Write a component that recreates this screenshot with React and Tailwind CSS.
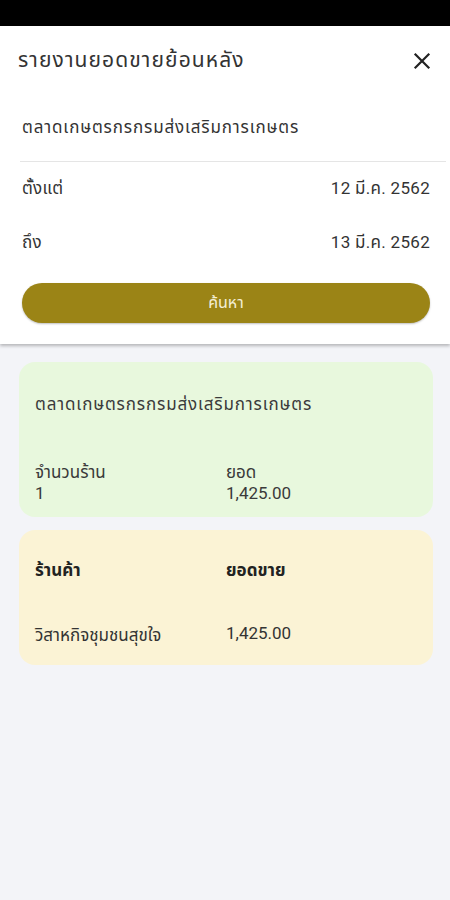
import React from "react";

const font = { fontFamily: 'Roboto, "Noto Sans", "Noto Sans Thai", sans-serif' };

function CloseIcon() {
  return (
    <svg viewBox="0 0 24 24" className="h-[24px] w-[24px]" fill="none" stroke="#222" strokeWidth="2.2" strokeLinecap="square">
      <path d="M5.5 5.5l13 13M18.5 5.5l-13 13" />
    </svg>
  );
}

export default function App() {
  return (
    <div className="w-[450px] h-[900px] bg-[#f3f4f8] flex flex-col" style={font}>
      {/* status bar */}
      <div className="h-[26px] bg-black" />

      {/* search panel */}
      <div className="bg-white shadow-[0_2px_3px_rgba(0,0,0,0.25)] pb-[21px]">
        <div className="h-[69px] flex items-center justify-between pl-[18px] pr-[16px]">
          <span className="text-[21px] tracking-[1.1px] text-[#333]">รายงานยอดขายย้อนหลัง</span>
          <CloseIcon />
        </div>
        <div className="h-[67px] flex items-center ml-[20px] mr-[4px] border-b border-[#e5e5e5]">
          <span className="text-[17px] tracking-[0.85px] text-[#333] pl-[2px]">ตลาดเกษตรกรกรมส่งเสริมการเกษตร</span>
        </div>
        <div className="flex justify-between items-center h-[54px] pl-[22px] pr-[20px] text-[17px] tracking-[0.3px] text-[#333]">
          <span>ตั้งแต่</span>
          <span>12 มี.ค. 2562</span>
        </div>
        <div className="flex justify-between items-center h-[54px] pl-[22px] pr-[20px] text-[17px] tracking-[0.3px] text-[#333]">
          <span>ถึง</span>
          <span>13 มี.ค. 2562</span>
        </div>
        <div className="pl-[22px] pr-[20px] mt-[13px]">
          <button className="w-full h-[40px] rounded-full bg-[#9b8416] text-[#f4efd6] text-[16px] shadow-[0_1px_2px_rgba(0,0,0,0.25)]">
            ค้นหา
          </button>
        </div>
      </div>

      <div className="flex flex-col gap-[13px] pl-[19px] pr-[17px] pt-[18px]">
        {/* summary card */}
        <div className="rounded-[16px] bg-[#e8f8dd] px-[16px] pt-[30px] pb-[13px] text-[#3a3a3a]">
          <div className="text-[17px] tracking-[0.85px] leading-[24px]">ตลาดเกษตรกรกรมส่งเสริมการเกษตร</div>
          <div className="grid grid-cols-[191px_1fr] mt-[46px] text-[17px] leading-[21px]">
            <div>
              <div>จำนวนร้าน</div>
              <div>1</div>
            </div>
            <div>
              <div>ยอด</div>
              <div>1,425.00</div>
            </div>
          </div>
        </div>

        {/* detail card */}
        <div className="rounded-[16px] bg-[#fbf3d5] px-[16px] pt-[28px] pb-[18px] text-[#222]">
          <div className="grid grid-cols-[191px_1fr] text-[17px] leading-[24px] font-bold">
            <div>ร้านค้า</div>
            <div>ยอดขาย</div>
          </div>
          <div className="grid grid-cols-[191px_1fr] mt-[41px] text-[17px] leading-[24px] text-[#333]">
            <div>วิสาหกิจชุมชนสุขใจ</div>
            <div className="-mt-[2px]">1,425.00</div>
          </div>
        </div>
      </div>
    </div>
  );
}
